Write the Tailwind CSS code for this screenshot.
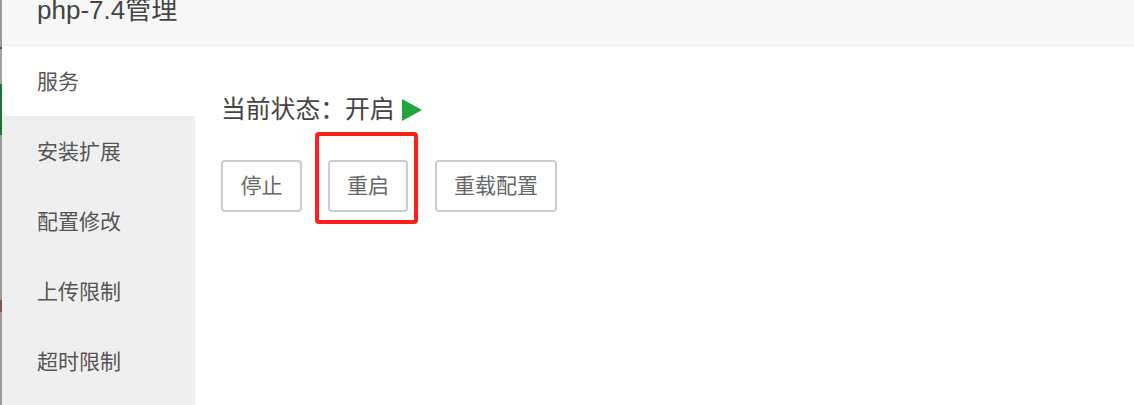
<!DOCTYPE html>
<html lang="en">
<head>
    <meta charset="UTF-8">
    <title>php-7.4管理</title>
    <script src="https://cdn.jsdelivr.net/npm/@tailwindcss/browser@4"></script>
</head>
<body class="w-[1134px] h-[405px] overflow-hidden bg-white font-['Liberation_Sans','Noto_Sans_CJK_SC',sans-serif] text-[#555]">
    <div class="flex h-[405px]">
        <!-- strip of the page behind the dialog -->
        <div class="w-[2px] shrink-0 flex flex-col">
            <div class="h-[47px] bg-[#999]"></div>
            <div class="h-[2px] bg-[#17762f]"></div>
            <div class="h-[35px] bg-[#a3a3a3]"></div>
            <div class="h-[51px] bg-[#17762f]"></div>
            <div class="h-[65px] bg-[#999]"></div>
            <div class="h-[100px] bg-[#a09a92]"></div>
            <div class="h-[12px] bg-[#7c5a4a]"></div>
            <div class="flex-1 bg-[#9a9a9a]"></div>
        </div>

        <div class="flex-1 flex flex-col min-w-0">
            <div class="h-[46px] shrink-0 bg-[#f7f7f7] border-b border-[#eee] pl-[35px] text-[26px] leading-[20px] text-[#444]">php-7.4管理</div>

            <div class="flex flex-1">
                <ul class="w-[193px] shrink-0 bg-[#efefef] text-[21px]">
                    <li class="h-[70px] bg-white pl-[35px] leading-[71px]">服务</li>
                    <li class="h-[70px] pl-[35px] leading-[71px]">安装扩展</li>
                    <li class="h-[70px] pl-[35px] leading-[71px]">配置修改</li>
                    <li class="h-[70px] pl-[35px] leading-[71px]">上传限制</li>
                    <li class="h-[70px] pl-[35px] leading-[71px]">超时限制</li>
                </ul>

                <div class="pl-[26px] pt-[47px]">
                    <div class="flex items-center h-[34px] text-[24.8px] text-[#444]">
                        <span>当前状态：</span><span>开启</span>
                        <svg class="ml-[7px]" width="20" height="24" viewBox="0 0 20 24"><path d="M0 1 L20 12 L0 23 Z" fill="#20a53a"/></svg>
                    </div>
                    <div class="flex gap-[26px] mt-[33px] text-[21px] text-[#666]">
                        <button class="h-[52px] w-[81px] rounded-[4px] border-2 border-[#ccc]">停止</button>
                        <div class="relative w-[81px]">
                            <button class="h-[52px] w-[80px] rounded-[4px] border-2 border-[#ccc]">重启</button>
                            <div class="absolute left-[-13px] top-[-28px] w-[103px] h-[92px] rounded-[4px] border-[4px] border-[#ff2015]"></div>
                        </div>
                        <button class="h-[52px] w-[122px] rounded-[4px] border-2 border-[#ccc]">重载配置</button>
                    </div>
                </div>
            </div>
        </div>
    </div>
</body>
</html>
